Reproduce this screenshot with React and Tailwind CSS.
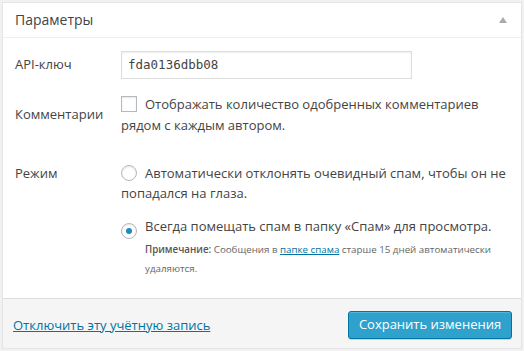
export default function App() {
  const font = { fontFamily: '"Open Sans", "Noto Sans", sans-serif' };
  return (
    <div className="w-[524px] h-[351px] bg-[#f1f1f1] p-[2px] text-[#444]" style={font}>
      <div className="w-[520px] h-[347px] bg-white border border-[#e5e5e5] flex flex-col">
        <div className="h-[35px] border-b border-[#eeeeee] flex items-center justify-between pl-[12px] pr-[14px] shrink-0">
          <span className="text-[14px] leading-none text-[#444]">Параметры</span>
          <svg width="8" height="6" viewBox="0 0 8 6"><path d="M4 0 L8 6 L0 6 Z" fill="#aaa" /></svg>
        </div>
        <div className="h-[260px] pl-[12px] pr-[10px] shrink-0 flex flex-col">
          <div className="mt-[13px] h-[28px] flex items-center">
            <div className="w-[106px] text-[13px]">API-ключ</div>
            <div className="w-[291px] h-[28px] border border-[#dddddd] shadow-[inset_0_1px_2px_rgba(0,0,0,0.07)] flex items-center pl-[6px] text-[12.5px] text-[#444]" style={{ fontFamily: '"DejaVu Sans Mono", monospace' }}>fda0136dbb08</div>
          </div>
          <div className="mt-[15px] flex items-center">
            <div className="w-[106px] text-[13px] shrink-0">Комментарии</div>
            <div className="text-[13px] leading-[21px] w-[388px]">
              <span className="inline-block align-[-3px] w-[16px] h-[16px] border border-[#b4b9be] shadow-[inset_0_1px_2px_rgba(0,0,0,0.1)] mr-[8px] bg-white"></span>
              Отображать количество одобренных комментариев рядом с каждым автором.
            </div>
          </div>
          <div className="mt-[27px] flex items-start">
            <div className="w-[106px] text-[13px] leading-[20px] shrink-0">Режим</div>
            <div className="w-[388px]">
              <div className="text-[13px] leading-[20px]">
                <span className="inline-block align-[-3px] w-[16px] h-[16px] rounded-full border border-[#b4b9be] shadow-[inset_0_1px_2px_rgba(0,0,0,0.1)] mr-[8px] bg-white"></span>
                Автоматически отклонять очевидный спам, чтобы он не попадался на глаза.
              </div>
              <div className="mt-[13px] text-[13px] leading-[20px]">
                <span className="inline-flex items-center justify-center align-[-3px] w-[16px] h-[16px] rounded-full border border-[#b4b9be] shadow-[inset_0_1px_2px_rgba(0,0,0,0.1)] mr-[8px] bg-white">
                  <span className="w-[6px] h-[6px] rounded-full bg-[#1e8cbe]"></span>
                </span>
                Всегда помещать спам в папку «Спам» для просмотра.
              </div>
              <div className="ml-[24px] mt-[1px] text-[9.75px] leading-[19px] text-[#666]">
                <b className="font-semibold text-[#555]">Примечание:</b> Сообщения в <a className="text-[#0074a2] underline" href="#">папке спама</a> старше 15 дней автоматически удаляются.
              </div>
            </div>
          </div>
        </div>
        <div className="h-[50px] border-t border-[#dddddd] bg-[#f5f5f5] flex items-center justify-between pl-[10px] pr-[9px] shrink-0">
          <a href="#" className="text-[13px] text-[#0074a2] underline mt-[4px]">Отключить эту учётную запись</a>
          <button className="w-[164px] h-[28px] mt-[2px] rounded-[3px] bg-[#2ea2cc] border border-[#0074a2] shadow-[inset_0_1px_0_rgba(120,200,230,0.5),0_1px_0_rgba(0,0,0,0.15)] text-white text-[13px] leading-none">Сохранить изменения</button>
        </div>
      </div>
    </div>
  );
}
